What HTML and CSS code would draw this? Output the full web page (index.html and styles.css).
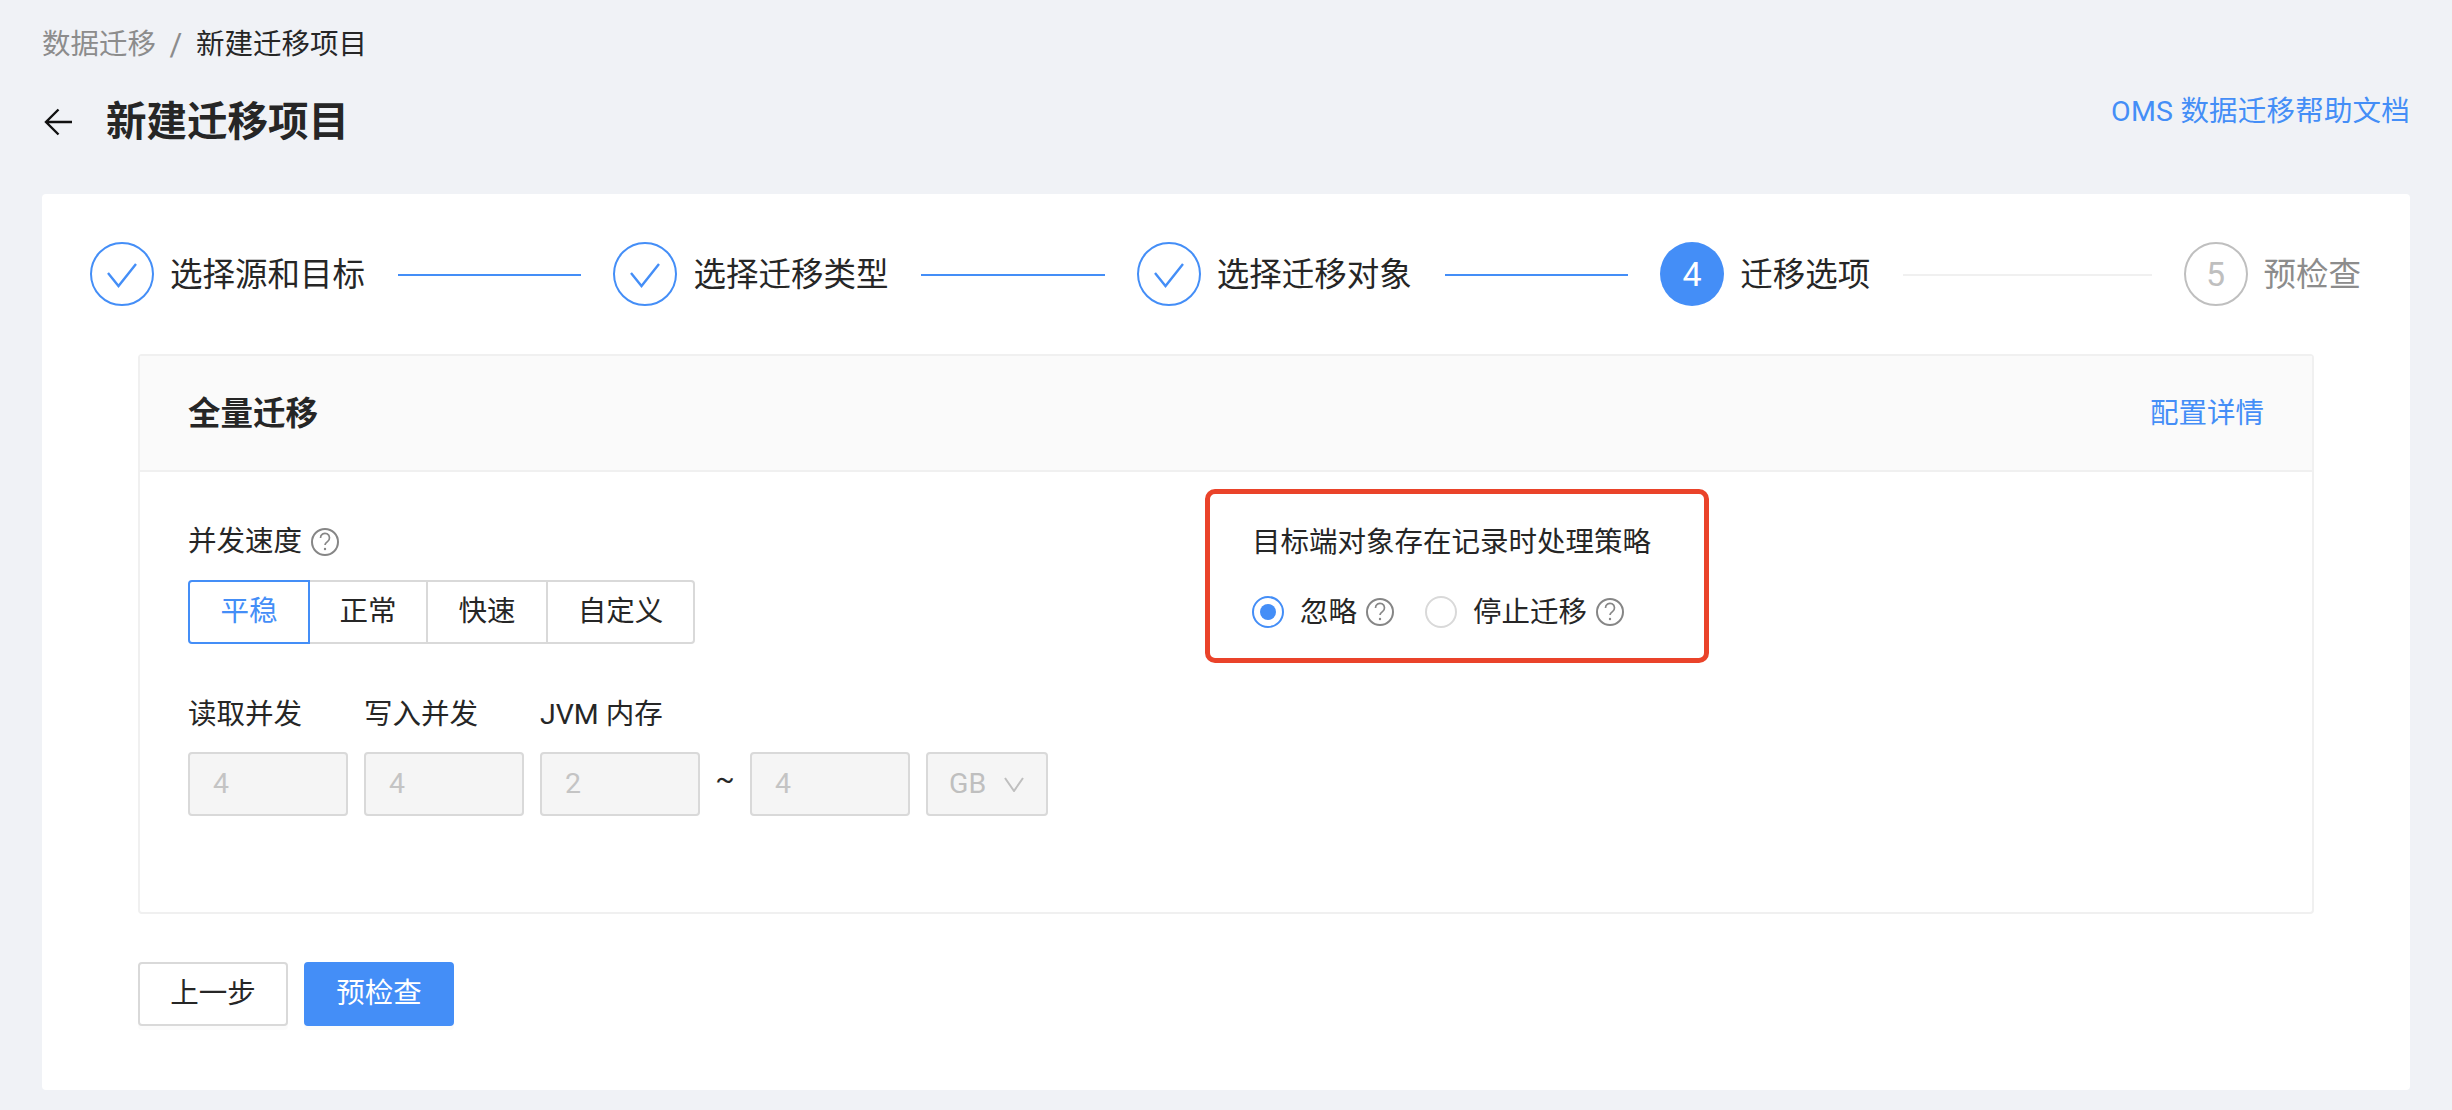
FILE: index.html
```html
<!DOCTYPE html>
<html lang="zh-CN">
<head>
<meta charset="utf-8">
<title>新建迁移项目</title>
<link rel="stylesheet" href="styles.css">
</head>
<body>
<div class="page">
  <nav class="breadcrumb">
    <span class="crumb-link">数据迁移</span>
    <span class="crumb-sep">/</span>
    <span class="crumb-current">新建迁移项目</span>
  </nav>
  <header class="page-head">
    <div class="page-title">
      <svg class="back-icon" width="32" height="32" viewBox="0 0 32 32" fill="none"><path d="M30 16H4M16.500 3.500 4 16l12.500 12.500" stroke="#111" stroke-width="2.400"/></svg>
      <h1 class="title-text">新建迁移项目</h1>
    </div>
    <a class="help-link">OMS 数据迁移帮助文档</a>
  </header>

  <main class="card">
    <ol class="steps">
      <li class="step">
        <span class="step-circle done"><svg width="64" height="64" viewBox="0 0 64 64" fill="none"><path d="M18 31 28.500 44 46 22" stroke="#448ef7" stroke-width="2.400"/></svg></span>
        <span class="step-name">选择源和目标</span>
        <span class="step-line active"></span>
      </li>
      <li class="step">
        <span class="step-circle done"><svg width="64" height="64" viewBox="0 0 64 64" fill="none"><path d="M18 31 28.500 44 46 22" stroke="#448ef7" stroke-width="2.400"/></svg></span>
        <span class="step-name">选择迁移类型</span>
        <span class="step-line active"></span>
      </li>
      <li class="step">
        <span class="step-circle done"><svg width="64" height="64" viewBox="0 0 64 64" fill="none"><path d="M18 31 28.500 44 46 22" stroke="#448ef7" stroke-width="2.400"/></svg></span>
        <span class="step-name">选择迁移对象</span>
        <span class="step-line active"></span>
      </li>
      <li class="step">
        <span class="step-circle current">4</span>
        <span class="step-name">迁移选项</span>
        <span class="step-line"></span>
      </li>
      <li class="step last">
        <span class="step-circle pending">5</span>
        <span class="step-name muted">预检查</span>
      </li>
    </ol>

    <section class="panel">
      <div class="panel-head">
        <h2 class="panel-title">全量迁移</h2>
        <a class="panel-link">配置详情</a>
      </div>
      <div class="panel-body">
        <div class="col-left">
          <div class="label-row">
            <span>并发速度</span>
            <svg class="help" width="28" height="28" viewBox="0 0 28 28" fill="none"><circle cx="14" cy="14" r="13" stroke="#868686" stroke-width="2"/><path d="M9.500 10a4.500 4.500 0 1 1 7 3.600c-1.600 1.100-2.500 1.700-2.500 3.400" stroke="#868686" stroke-width="1.700"/><circle cx="14" cy="21" r="1.200" fill="#868686"/></svg>
          </div>
          <div class="seg">
            <span class="seg-item on">平稳</span>
            <span class="seg-item narrow">正常</span>
            <span class="seg-item">快速</span>
            <span class="seg-item wide">自定义</span>
          </div>
          <div class="fields">
            <div class="field">
              <div class="field-label">读取并发</div>
              <div class="input">4</div>
            </div>
            <div class="field">
              <div class="field-label">写入并发</div>
              <div class="input">4</div>
            </div>
            <div class="field">
              <div class="field-label">JVM 内存</div>
              <div class="range">
                <div class="input">2</div>
                <span class="tilde">~</span>
                <div class="input">4</div>
                <div class="select">
                  <span>GB</span>
                  <svg width="20" height="15" viewBox="0 0 20 15" fill="none"><path d="M1 1l9 13 9-13" stroke="#bfbfbf" stroke-width="2"/></svg>
                </div>
              </div>
            </div>
          </div>
        </div>
        <div class="callout">
          <div class="callout-title">目标端对象存在记录时处理策略</div>
          <div class="radios">
            <span class="radio on"></span>
            <span class="radio-text">忽略</span>
            <svg class="help" width="28" height="28" viewBox="0 0 28 28" fill="none"><circle cx="14" cy="14" r="13" stroke="#868686" stroke-width="2"/><path d="M9.500 10a4.500 4.500 0 1 1 7 3.600c-1.600 1.100-2.500 1.700-2.500 3.400" stroke="#868686" stroke-width="1.700"/><circle cx="14" cy="21" r="1.200" fill="#868686"/></svg>
            <span class="radio second"></span>
            <span class="radio-text">停止迁移</span>
            <svg class="help" width="28" height="28" viewBox="0 0 28 28" fill="none"><circle cx="14" cy="14" r="13" stroke="#868686" stroke-width="2"/><path d="M9.500 10a4.500 4.500 0 1 1 7 3.600c-1.600 1.100-2.500 1.700-2.500 3.400" stroke="#868686" stroke-width="1.700"/><circle cx="14" cy="21" r="1.200" fill="#868686"/></svg>
          </div>
        </div>
      </div>
    </section>

    <div class="actions">
      <button class="btn">上一步</button>
      <button class="btn primary">预检查</button>
    </div>
  </main>
</div>
</body>
</html>
```
FILE: styles.css
```css
* { box-sizing: border-box; }
html, body { margin: 0; padding: 0; }
body {
  background: #f0f2f6;
  color: #262626;
  font-family: Roboto, "Noto Sans CJK SC", sans-serif;
  font-size: 28.5px;
  line-height: 40px;
}
h1, h2 { margin: 0; }
ol { list-style: none; margin: 0; padding: 0; }

.page { padding: 23px 42px 20px; }

.breadcrumb { display: flex; line-height: 44px; margin-bottom: 23px; }
.crumb-link { color: #8c8c8c; }
.crumb-sep { color: #8c8c8c; width: 40px; text-align: center; font-size: 31px; }
.crumb-current { color: #262626; }

.page-head { display: flex; justify-content: space-between; align-items: flex-start; }
.page-title { display: flex; align-items: center; height: 64px; }
.back-icon { margin-right: 32px; }
.title-text { font-size: 40.5px; line-height: 64px; font-weight: 600; color: #262626; }
.help-link { color: #448ef7; line-height: 44px; letter-spacing: 0.2px; }

.card {
  margin-top: 40px;
  background: #fff;
  border-radius: 4px;
  padding: 48px 96px 64px;
}

.steps { display: flex; margin: 0 -48px 48px; }
.step { flex: 1 1 0; display: flex; align-items: center; height: 64px; }
.step.last { flex: 0 0 auto; margin-right: 1px; }
.step-circle {
  width: 64px;
  height: 64px;
  flex: none;
  border-radius: 50%;
  display: flex;
  align-items: center;
  justify-content: center;
  font-size: 34px;
}
.step-circle.done { border: 2px solid #448ef7; }
.step-circle.done svg { margin: -2px; flex: none; }
.step-circle.current { background: #448ef7; color: #fff; }
.step-circle.pending { border: 2px solid #bfbfbf; color: #bfbfbf; }
.step-name { font-size: 32.5px; line-height: 44px; padding-top: 2px; margin-left: 16px; flex: none; color: #262626; }
.step-name.muted { color: #8c8c8c; }
.step-line { flex: 1; height: 2px; background: #f0f0f0; margin: 2px 32px 0 33px; }
.step-line.active { background: #448ef7; }

.panel { border: 2px solid #f0f0f0; border-radius: 4px; }
.panel-head {
  display: flex;
  justify-content: space-between;
  align-items: center;
  height: 116px;
  padding: 0 48px;
  background: #fafafa;
  border-bottom: 2px solid #f0f0f0;
}
.panel-title { font-size: 32.5px; line-height: 44px; padding-top: 2px; font-weight: 600; color: #262626; }
.panel-link { color: #448ef7; padding-top: 2px; }

.panel-body { display: flex; align-items: flex-start; padding: 17px 48px 96px; }
.col-left { width: 1017px; flex: none; padding-top: 33px; }

.label-row { display: flex; align-items: center; gap: 9px; line-height: 42px; height: 40px; }
.help { display: block; flex: none; }

.seg { display: flex; margin-top: 18px; }
.seg-item {
  width: 122px;
  height: 64px;
  line-height: 60px;
  border: 2px solid #d9d9d9;
  margin-left: -2px;
  background: #fff;
  color: #262626;
  text-align: center;
  white-space: nowrap;
}
.seg-item.narrow { width: 120px; }
.seg-item.wide { width: 149px; border-radius: 0 4px 4px 0; }
.seg-item:first-child { margin-left: 0; border-radius: 4px 0 0 4px; }
.seg-item.on { border-color: #448ef7; color: #448ef7; position: relative; z-index: 1; }

.fields { display: flex; gap: 16px; margin-top: 50px; }
.field-label { margin-bottom: 18px; line-height: 42px; height: 40px; }
.input {
  width: 160px;
  height: 64px;
  padding: 0 23px;
  line-height: 60px;
  background: #f5f5f5;
  border: 2px solid #d9d9d9;
  border-radius: 4px;
  color: #c4c4c4;
}
.range { display: flex; }
.tilde { width: 50px; text-align: center; line-height: 54px; color: #262626; }
.select {
  display: flex;
  align-items: center;
  justify-content: space-between;
  width: 122px;
  height: 64px;
  margin-left: 16px;
  padding: 0 22px 0 21px;
  background: #f5f5f5;
  border: 2px solid #d9d9d9;
  border-radius: 4px;
  color: #bfbfbf;
}

.callout {
  width: 504px;
  height: 174px;
  padding: 28px 20px 0 42px;
  border: 5px solid #ea432a;
  border-radius: 10px;
}
.callout-title { margin-bottom: 30px; white-space: nowrap; line-height: 42px; height: 40px; }
.radios { display: flex; align-items: center; height: 40px; }
.radio {
  width: 32px;
  height: 32px;
  flex: none;
  border: 2px solid #d9d9d9;
  border-radius: 50%;
  background: #fff;
  display: flex;
  align-items: center;
  justify-content: center;
}
.radio.on { border-color: #448ef7; }
.radio.on::after {
  content: "";
  width: 16px;
  height: 16px;
  border-radius: 50%;
  background: #448ef7;
}
.radio.second { margin-left: 31px; }
.radio-text { margin: 0 9px 0 16px; line-height: 42px; height: 40px; }

.actions { display: flex; gap: 16px; margin-top: 48px; }
.btn {
  width: 150px;
  height: 64px;
  padding: 0;
  font: inherit;
  color: #262626;
  background: #fff;
  border: 2px solid #d9d9d9;
  border-radius: 4px;
  box-shadow: 0 4px 0 rgba(0, 0, 0, 0.015);
}
.btn.primary { background: #448ef7; border-color: #448ef7; color: #fff; }
```
